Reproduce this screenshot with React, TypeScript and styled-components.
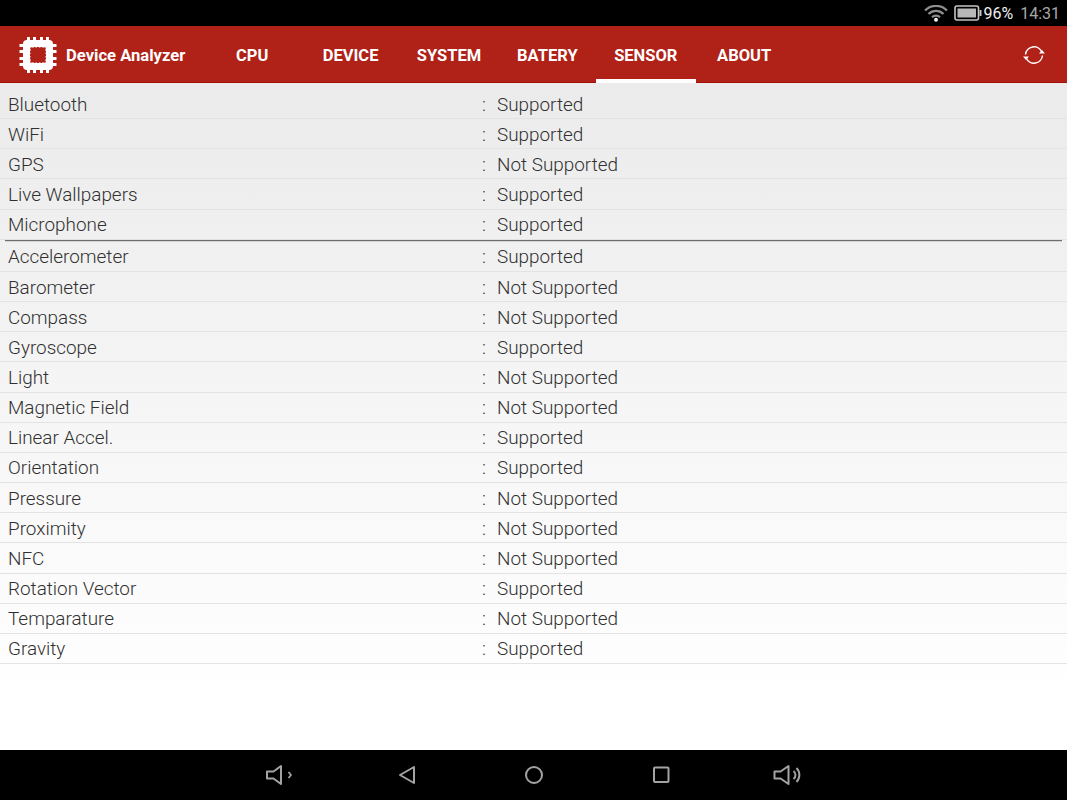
import React from 'react';
import styled, { createGlobalStyle } from 'styled-components';

const primaryRows = [
  ['Bluetooth', 'Supported'],
  ['WiFi', 'Supported'],
  ['GPS', 'Not Supported'],
  ['Live Wallpapers', 'Supported'],
  ['Microphone', 'Supported'],
];

const sensorRows = [
  ['Accelerometer', 'Supported'],
  ['Barometer', 'Not Supported'],
  ['Compass', 'Not Supported'],
  ['Gyroscope', 'Supported'],
  ['Light', 'Not Supported'],
  ['Magnetic Field', 'Not Supported'],
  ['Linear Accel.', 'Supported'],
  ['Orientation', 'Supported'],
  ['Pressure', 'Not Supported'],
  ['Proximity', 'Not Supported'],
  ['NFC', 'Not Supported'],
  ['Rotation Vector', 'Supported'],
  ['Temparature', 'Not Supported'],
  ['Gravity', 'Supported'],
];

const tabs = ['CPU', 'DEVICE', 'SYSTEM', 'BATERY', 'SENSOR', 'ABOUT'];

const ChipLogo = () => (
  <svg width="40" height="40" viewBox="0 0 40 40">
    <rect x="5" y="5" width="30" height="30" rx="4" fill="#fff" />
    <g fill="#fff">
      <rect x="9" y="2" width="3" height="4" />
      <rect x="15" y="2" width="3" height="4" />
      <rect x="22" y="2" width="3" height="4" />
      <rect x="28" y="2" width="3" height="4" />
      <rect x="9" y="34" width="3" height="4" />
      <rect x="15" y="34" width="3" height="4" />
      <rect x="22" y="34" width="3" height="4" />
      <rect x="28" y="34" width="3" height="4" />
      <rect x="1.500" y="9" width="4" height="3" />
      <rect x="1.500" y="15" width="4" height="3" />
      <rect x="1.500" y="22" width="4" height="3" />
      <rect x="1.500" y="28" width="4" height="3" />
      <rect x="34.500" y="9" width="4" height="3" />
      <rect x="34.500" y="15" width="4" height="3" />
      <rect x="34.500" y="22" width="4" height="3" />
      <rect x="34.500" y="28" width="4" height="3" />
    </g>
    <path
      fill="#b02118"
      d="M14 12.500h2v-.5h1.500v.5h1.500v-.5h2v.5h1.500v-.5H24v.5h2a1 1 0 0 1 1.500 1.500v2h.5v1.500h-.5V19h.5v2h-.5v1.500h.5V24h-.5v2a1 1 0 0 1-1.500 1.500h-2v.5h-1.500v-.5H21v.5h-2v-.5h-1.500v.5H16v-.5h-2a1 1 0 0 1-1.500-1.500v-2H12v-1.500h.5V21H12v-2h.5v-1.500H12V16h.5v-2a1 1 0 0 1 1.500-1.500z"
    />
  </svg>
);

const RefreshIcon = () => (
  <svg width="24" height="24" viewBox="0 0 24 24" fill="none">
    <path d="M3.500 11.500A8.500 8.500 0 0 1 19.800 9" stroke="#fff" strokeWidth="1.500" />
    <path d="M20.500 12.500A8.500 8.500 0 0 1 4.200 15" stroke="#fff" strokeWidth="1.500" />
    <path d="M17 10.500h6l-3-3.500z" fill="#fff" />
    <path d="M7 13.500H1l3 3.500z" fill="#fff" />
  </svg>
);

const WifiIcon = () => (
  <svg width="24" height="17" viewBox="0 0 24 17" fill="none" stroke="#8f8f8f" strokeWidth="2.200">
    <path d="M1 5.500a15.500 15.500 0 0 1 22 0" />
    <path d="M4.500 9a10.500 10.500 0 0 1 15 0" />
    <path d="M8 12.300a5.500 5.500 0 0 1 8 0" />
    <circle cx="12" cy="14.800" r="2" fill="#eee" stroke="none" />
  </svg>
);

const BatteryIcon = () => (
  <svg width="28" height="16" viewBox="0 0 28 16">
    <rect x="1" y="1" width="23.500" height="14" rx="2" fill="none" stroke="#c4c4c4" strokeWidth="1.600" />
    <rect x="3.500" y="3.500" width="18.500" height="9" fill="#b8b8b8" />
    <rect x="25.500" y="5" width="2" height="6" fill="#c4c4c4" />
  </svg>
);

const NavIcon: React.FC<{ width: number; children: React.ReactNode }> = ({ width, children }) => (
  <svg
    width={width}
    height="22"
    viewBox={`0 0 ${width} 22`}
    fill="none"
    stroke="#a3a3a3"
    strokeWidth="2"
    strokeLinejoin="round"
  >
    {children}
  </svg>
);

const App: React.FC = () => (
  <>
    <GlobalStyle />
    <Screen>
      <StatusBar>
        <WifiSlot>
          <WifiIcon />
        </WifiSlot>
        <BatteryIcon />
        <BatteryText>96%</BatteryText>
        <Clock>14:31</Clock>
      </StatusBar>

      <Header>
        <Brand>
          <ChipLogo />
          <BrandName>Device Analyzer</BrandName>
        </Brand>
        <Tabs>
          {tabs.map((tab) => (
            <Tab key={tab} $active={tab === 'SENSOR'}>
              {tab}
            </Tab>
          ))}
        </Tabs>
        <RefreshButton>
          <RefreshIcon />
        </RefreshButton>
      </Header>

      <Content>
        <Group>
          {primaryRows.map(([label, value]) => (
            <Row key={label}>
              <Label>{label}</Label>
              <Colon>:</Colon>
              <Value>{value}</Value>
            </Row>
          ))}
        </Group>
        <Divider />
        <Group>
          {sensorRows.map(([label, value]) => (
            <Row key={label}>
              <Label>{label}</Label>
              <Colon>:</Colon>
              <Value>{value}</Value>
            </Row>
          ))}
        </Group>
      </Content>

      <NavBar>
        <NavSlot>
          <NavIcon width={30}>
            <path d="M2 7.500h6.500L16 2v18L8.500 14.500H2z" />
            <path d="M23.500 8l2.500 3-2.500 3" strokeWidth="1.800" />
          </NavIcon>
        </NavSlot>
        <NavSlot>
          <NavIcon width={18}>
            <path d="M2 11L16 3v16z" />
          </NavIcon>
        </NavSlot>
        <NavSlot>
          <NavIcon width={18}>
            <circle cx="9" cy="11" r="8" />
          </NavIcon>
        </NavSlot>
        <NavSlot>
          <NavIcon width={18}>
            <rect x="2" y="3.500" width="14.500" height="14.500" rx="1" />
          </NavIcon>
        </NavSlot>
        <NavSlot>
          <NavIcon width={30}>
            <path d="M1.500 7.500h6L15.500 2v18L7.500 14.500h-6z" />
            <path d="M20.500 7a5 5 0 0 1 0 8" strokeWidth="2" />
            <path d="M23.500 4a10 10 0 0 1 0 14" strokeWidth="2" />
          </NavIcon>
        </NavSlot>
      </NavBar>
    </Screen>
  </>
);

const GlobalStyle = createGlobalStyle`
  html, body {
    margin: 0;
    padding: 0;
    background: #fff;
  }
  body {
    font-family: Roboto, "Liberation Sans", sans-serif;
  }
`;

const Screen = styled.div`
  width: 1067px;
  height: 800px;
  display: flex;
  flex-direction: column;
  overflow: hidden;
`;

const StatusBar = styled.div`
  height: 26px;
  flex: none;
  background: #000;
  display: flex;
  align-items: center;
  justify-content: flex-end;
  padding-right: 7px;
  color: #fff;
  font-size: 16px;
`;

const WifiSlot = styled.div`
  display: flex;
  margin-right: 6px;
`;

const BatteryText = styled.span`
  margin-left: 1px;
  color: #eee;
`;

const Clock = styled.span`
  margin-left: 7px;
  color: #a8a8a8;
`;

const Header = styled.header`
  height: 57px;
  flex: none;
  background: #b02118;
  box-shadow: inset 0 -1px #a50f0a;
  display: flex;
  align-items: center;
`;

const Brand = styled.div`
  width: 203px;
  flex: none;
  display: flex;
  align-items: center;
  gap: 8px;
  padding-left: 18px;
  padding-top: 1px;
  box-sizing: border-box;
`;

const BrandName = styled.span`
  color: #fff;
  font-size: 16.6px;
  font-weight: 700;
  white-space: nowrap;
`;

const Tabs = styled.nav`
  display: flex;
  height: 100%;
`;

const Tab = styled.div<{ $active: boolean }>`
  width: ${(props) => (props.$active ? '100.4px' : '98.4px')};
  margin: 0 ${(props) => (props.$active ? '-1px' : '0')};
  box-sizing: border-box;
  display: flex;
  align-items: center;
  justify-content: center;
  color: #fff;
  font-size: 16.5px;
  font-weight: 700;
  border-bottom: 4px solid ${(props) => (props.$active ? '#fff' : 'transparent')};
  padding-top: 5px;
`;

const RefreshButton = styled.div`
  margin-left: auto;
  margin-right: 21px;
  display: flex;
`;

const Content = styled.main`
  flex: 1;
  padding-top: 6px;
  background: linear-gradient(#ebebeb, #ffffff 92%);
`;

const Group = styled.div`
  display: flex;
  flex-direction: column;
`;

const Row = styled.div`
  height: 30.17px;
  box-sizing: border-box;
  border-bottom: 1px solid #e3e3e3;
  display: flex;
  align-items: center;
  padding: 1px 0 0 8px;
  font-size: 18.9px;
  font-weight: 300;
  color: #303030;
  white-space: nowrap;
`;

const Label = styled.span`
  width: 474px;
`;

const Colon = styled.span`
  width: 15px;
`;

const Value = styled.span``;

const Divider = styled.div`
  height: 1px;
  margin: 0 5px;
  background: #6e6e6e;
  border-bottom: 1px solid #d4d4d4;
`;

const NavBar = styled.footer`
  height: 50px;
  flex: none;
  background: #000;
  display: flex;
  justify-content: center;
  align-items: center;
`;

const NavSlot = styled.div`
  width: 127px;
  display: flex;
  justify-content: center;
`;

export default App;
